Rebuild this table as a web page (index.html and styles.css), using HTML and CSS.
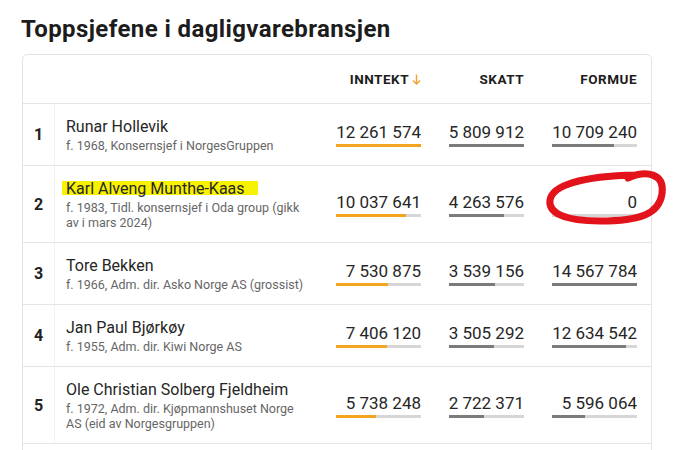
FILE: index.html
```html
<!DOCTYPE html>
<html lang="no">
<head>
<meta charset="utf-8">
<title>Toppsjefene i dagligvarebransjen</title>
<link rel="stylesheet" href="styles.css">
</head>
<body>
<main class="page">
  <h1 class="title">Toppsjefene i dagligvarebransjen</h1>
  <div class="card">
    <div class="row head">
      <div class="rank"></div>
      <div class="who"></div>
      <div class="num inc"><span class="col-h">Inntekt<svg class="arrow" width="9" height="11" viewBox="0 0 9 11"><path d="M4.5 0.5V10M1 6.5L4.5 10L8 6.5" fill="none" stroke="#f2a12a" stroke-width="1.4"/></svg></span></div>
      <div class="num tax"><span class="col-h">Skatt</span></div>
      <div class="num wealth"><span class="col-h">Formue</span></div>
    </div>

    <div class="row">
      <div class="rank">1</div>
      <div class="who"><div class="name">Runar Hollevik</div><div class="desc">f. 1968, Konsernsjef i NorgesGruppen</div></div>
      <div class="num inc"><span class="val">12 261 574</span><span class="bar"><span class="fill" style="width:100%"></span></span></div>
      <div class="num tax"><span class="val">5 809 912</span><span class="bar"><span class="fill" style="width:100%"></span></span></div>
      <div class="num wealth"><span class="val">10 709 240</span><span class="bar"><span class="fill" style="width:73.5%"></span></span></div>
    </div>

    <div class="row">
      <div class="rank">2</div>
      <div class="who"><div class="name"><span class="mark">Karl Alveng Munthe-Kaas</span></div><div class="desc">f. 1983, Tidl. konsernsjef i Oda group (gikk av i mars 2024)</div></div>
      <div class="num inc"><span class="val">10 037 641</span><span class="bar"><span class="fill" style="width:81.9%"></span></span></div>
      <div class="num tax"><span class="val">4 263 576</span><span class="bar"><span class="fill" style="width:73.4%"></span></span></div>
      <div class="num wealth"><span class="val">0</span><span class="bar"><span class="fill" style="width:0%"></span></span></div>
    </div>

    <div class="row">
      <div class="rank">3</div>
      <div class="who"><div class="name">Tore Bekken</div><div class="desc">f. 1966, Adm. dir. Asko Norge AS (grossist)</div></div>
      <div class="num inc"><span class="val">7 530 875</span><span class="bar"><span class="fill" style="width:61.4%"></span></span></div>
      <div class="num tax"><span class="val">3 539 156</span><span class="bar"><span class="fill" style="width:60.9%"></span></span></div>
      <div class="num wealth"><span class="val">14 567 784</span><span class="bar"><span class="fill" style="width:100%"></span></span></div>
    </div>

    <div class="row">
      <div class="rank">4</div>
      <div class="who"><div class="name">Jan Paul Bjørkøy</div><div class="desc">f. 1955, Adm. dir. Kiwi Norge AS</div></div>
      <div class="num inc"><span class="val">7 406 120</span><span class="bar"><span class="fill" style="width:60.4%"></span></span></div>
      <div class="num tax"><span class="val">3 505 292</span><span class="bar"><span class="fill" style="width:60.3%"></span></span></div>
      <div class="num wealth"><span class="val">12 634 542</span><span class="bar"><span class="fill" style="width:86.7%"></span></span></div>
    </div>

    <div class="row">
      <div class="rank">5</div>
      <div class="who"><div class="name">Ole Christian Solberg Fjeldheim</div><div class="desc">f. 1972, Adm. dir. Kjøpmannshuset Norge AS (eid av Norgesgruppen)</div></div>
      <div class="num inc"><span class="val">5 738 248</span><span class="bar"><span class="fill" style="width:46.8%"></span></span></div>
      <div class="num tax"><span class="val">2 722 371</span><span class="bar"><span class="fill" style="width:46.9%"></span></span></div>
      <div class="num wealth"><span class="val">5 596 064</span><span class="bar"><span class="fill" style="width:38.4%"></span></span></div>
    </div>
  </div>

  <svg class="annotation" width="673" height="450" viewBox="0 0 673 450" aria-hidden="true">
    <path d="M628 178 C646 170 665 173 662 194 C659 214 640 221 600 221 C565 221 548 213 550 200 C552 186 580 176 636 175" fill="none" stroke="#e3131b" stroke-width="7" stroke-linecap="round" stroke-linejoin="round"/>
  </svg>
</main>
</body>
</html>
```

FILE: styles.css
```css
* { box-sizing: border-box; }

body {
  margin: 0;
  background: #ffffff;
  color: #222222;
  font-family: Roboto, "Noto Sans", "DejaVu Sans", sans-serif;
}

.page {
  position: relative;
  padding: 13px 0 0 21px;
}

.title {
  margin: 0 0 9px 0;
  font-size: 24px;
  line-height: 32px;
  font-weight: 700;
  letter-spacing: 0.4px;
  color: #1c1c1c;
}

.card {
  width: 630px;
  margin-left: 1px;
  padding-bottom: 12px;
  border: 1px solid #e3e3e3;
  border-radius: 5px;
}

.row {
  display: flex;
  align-items: center;
  padding-right: 14px;
  border-bottom: 1px solid #e4e4e4;
}

.row.head {
  height: 49px;
}

.rank {
  flex: none;
  width: 32px;
  align-self: stretch;
  display: flex;
  align-items: center;
  justify-content: center;
  border-right: 1px solid #f3f3f3;
  font-size: 16px;
  font-weight: 700;
  color: #222222;
}

.head .rank { border-right: none; }

.who {
  flex: 1;
  min-width: 0;
  padding: 12px 28px 12px 11px;
}

.name {
  font-size: 16px;
  line-height: 22px;
  color: #262626;
}

.mark {
  margin-left: -4px;
  padding: 0 13px 0 4px;
  background: linear-gradient(#f7f200, #f7f200) no-repeat;
  background-size: 100% 14px;
  background-position: 0 2px;
}

.desc {
  font-size: 12.5px;
  line-height: 15px;
  color: #666666;
}

.num {
  flex: none;
  display: flex;
  flex-direction: column;
  align-items: flex-end;
  white-space: nowrap;
}

.num.inc { width: 85px; }
.num.tax { width: 75px; margin-left: 28px; }
.num.wealth { width: 85px; margin-left: 28px; }

.col-h {
  display: flex;
  align-items: center;
  gap: 3px;
  font-size: 13.5px;
  font-weight: 700;
  letter-spacing: 0.5px;
  text-transform: uppercase;
  color: #1c1c1c;
}

.val {
  font-size: 17px;
  line-height: 20px;
  color: #262626;
}

.bar {
  display: block;
  width: 100%;
  height: 3px;
  margin-top: 2px;
  background: #d6d6d6;
}

.fill {
  display: block;
  height: 100%;
  background: #7b7b7b;
}

.inc .fill { background: #f4a51f; }

.annotation {
  position: absolute;
  left: 0;
  top: 0;
  pointer-events: none;
}
```
